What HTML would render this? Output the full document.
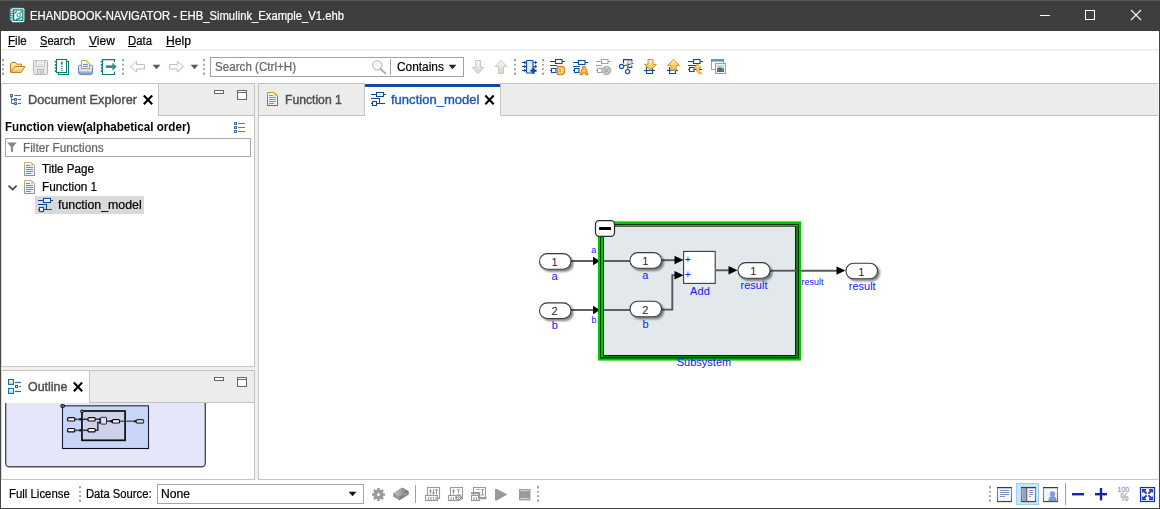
<!DOCTYPE html>
<html lang="en"><head><meta charset="utf-8"><title>EHANDBOOK-NAVIGATOR - EHB_Simulink_Example_V1.ehb</title>
<style>
*{box-sizing:border-box;margin:0;padding:0}
html,body{width:1160px;height:509px;overflow:hidden;background:#fff}
body{font-family:"Liberation Sans","DejaVu Sans",sans-serif;font-size:12px;color:#000;position:relative}
#win{position:absolute;left:0;top:0;width:1160px;height:509px;background:#fff;overflow:hidden}
#win div,#win svg{position:absolute}
.tx{position:absolute;white-space:pre;line-height:16px;height:16px;transform-origin:0 0;display:block}
.tx u{text-decoration:underline;text-decoration-thickness:1px;text-underline-offset:1px}
#title{left:0;top:0;width:1160px;height:31px;background:#3e3e3e}
.g{background:#ececec}
.b{background:#c4c4c4}
</style></head>
<body>
<div id="win">
<!-- window chrome -->
<div id="title"></div>
<div style="left:0;top:0;width:1160px;height:1px;background:#575757"></div>
<div style="left:0;top:31px;width:1px;height:478px;background:#464646"></div>
<div style="left:1159px;top:31px;width:1px;height:478px;background:#464646"></div>
<div style="left:0;top:508px;width:1160px;height:1px;background:#464646"></div>
<!-- menu separator -->
<div style="left:2px;top:49px;width:1156px;height:2px;background:#f0f0f0"></div>
<!-- toolbar search box -->
<div style="left:210px;top:57px;width:254px;height:20px;border:1px solid #a2a2a8;background:#fff"></div>
<div style="left:390px;top:59px;width:1px;height:16px;background:#a0a0a0"></div>
<!-- page background under panels -->
<div style="left:1px;top:83px;width:1158px;height:397px;background:#f0f0f0"></div>
<!-- left top panel: Document Explorer -->
<div style="left:1px;top:83px;width:254px;height:284px;background:#fff;border:1px solid #c4c4c4;border-left-color:#dadada"></div>
<div class="g" style="left:2px;top:84px;width:252px;height:31px"></div>
<div style="left:2px;top:115px;width:252px;height:1px;background:#c4c4c4"></div>
<div style="left:2px;top:84px;width:156px;height:32px;background:#fff"></div>
<div style="left:158px;top:84px;width:1px;height:32px;background:#c4c4c4"></div>
<div style="left:5px;top:138px;width:246px;height:19px;border:1px solid #a6a6ac;background:#fff"></div>
<div style="left:35px;top:196px;width:109px;height:18px;background:#d9d9d9"></div>
<!-- left bottom panel: Outline -->
<div style="left:1px;top:370px;width:254px;height:110px;background:#fff;border:1px solid #c4c4c4;border-left-color:#dadada"></div>
<div class="g" style="left:2px;top:371px;width:252px;height:31px"></div>
<div style="left:2px;top:402px;width:252px;height:1px;background:#c4c4c4"></div>
<div style="left:2px;top:371px;width:87px;height:32px;background:#fff"></div>
<div style="left:89px;top:371px;width:1px;height:32px;background:#c4c4c4"></div>
<!-- editor -->
<div style="left:258px;top:83px;width:900px;height:397px;background:#fff;border:1px solid #c4c4c4;border-right:0"></div>
<div class="g" style="left:259px;top:84px;width:899px;height:31px"></div>
<div style="left:259px;top:115px;width:899px;height:1px;background:#c4c4c4"></div>
<div style="left:364px;top:84px;width:1px;height:31px;background:#c4c4c4"></div>
<div style="left:365px;top:83px;width:135px;height:33px;background:#fff"></div>
<div style="left:365px;top:84px;width:135px;height:3px;background:#15489e"></div>
<div style="left:500px;top:84px;width:1px;height:32px;background:#c4c4c4"></div>
<!-- status bar -->
<div style="left:1px;top:480px;width:1158px;height:28px;background:#fff"></div>
<div style="left:157px;top:484px;width:207px;height:20px;border:1px solid #a6a6ac;background:#fff"></div>
<div style="left:415px;top:485px;width:1px;height:18px;background:#a0a0a0"></div>
<div style="left:1065px;top:483px;width:1px;height:22px;background:#a0a0a0"></div>
<div style="left:1016px;top:483px;width:23px;height:22px;background:#cce4f7;border:1px solid #99d1ff"></div>
<svg style="left:0;top:0" width="1160" height="509" viewBox="0 0 1160 509">
<!-- title bar: app icon + window buttons -->
<g>
<rect x="9.6" y="7.2" width="13.6" height="13.6" rx="1.6" fill="#0a7f78"/>
<rect x="11.4" y="8.2" width="13" height="14" rx="1.4" fill="#fff"/>
<rect x="9.4" y="9.4" width="3.4" height="11" fill="#0a7f78"/>
<path d="M11.6 9.6V20.6" stroke="#fff" stroke-width="2.2" stroke-dasharray="1.3 0.9"/>
<rect x="13.6" y="9.9" width="9.2" height="10.4" fill="#f0faf8" stroke="#0a7f78" stroke-width="1.2"/>
<path d="M14.6 13.5Q16.5 12.5 16.4 10.6M21.8 11.4L17 16.4M16 19.4Q19.6 19 21.8 16.6" stroke="#0a7f78" stroke-width="1.1" fill="none"/>
<circle cx="18.6" cy="15" r="1.7" fill="#fff" stroke="#2a958e" stroke-width="0.9"/>
</g>
<g stroke="#fff" stroke-width="1" fill="none">
<path d="M1040 15.5H1050"/>
<rect x="1085.5" y="10.5" width="9" height="9"/>
<path d="M1131 10L1141 20M1141 10L1131 20" stroke-width="1.1"/>
</g>
<defs>
<linearGradient id="gFold" x1="0" y1="0" x2="0" y2="1"><stop offset="0" stop-color="#fdeeb8"/><stop offset="1" stop-color="#f3c050"/></linearGradient>
<linearGradient id="gPrn" x1="0" y1="0" x2="0" y2="1"><stop offset="0" stop-color="#f4f6fc"/><stop offset="0.55" stop-color="#c8d2ee"/><stop offset="1" stop-color="#6f88cc"/></linearGradient>
<linearGradient id="gArr" x1="0" y1="0" x2="0" y2="1"><stop offset="0" stop-color="#f8f8f4"/><stop offset="1" stop-color="#d6d4c8"/></linearGradient>
<linearGradient id="gOr" x1="0" y1="0" x2="0" y2="1"><stop offset="0" stop-color="#fff4cc"/><stop offset="1" stop-color="#f2b630"/></linearGradient>
<linearGradient id="gDoc" x1="0" y1="0" x2="0" y2="1"><stop offset="0" stop-color="#c49428"/><stop offset="1" stop-color="#786a3c"/></linearGradient>
<linearGradient id="gDisk" x1="0" y1="0" x2="1" y2="0"><stop offset="0" stop-color="#c8c8c8"/><stop offset="0.5" stop-color="#a0a0a0"/><stop offset="1" stop-color="#666"/></linearGradient>
<linearGradient id="gDoc2" x1="0" y1="0" x2="0" y2="1"><stop offset="0" stop-color="#c9b47a"/><stop offset="0.5" stop-color="#a8a290"/><stop offset="1" stop-color="#7d8fbc"/></linearGradient>
</defs>
<!-- toolbar separators (drag handles) -->
<g fill="#a8a498">
<g transform="translate(2 59)"><rect x="0" y="0" width="2" height="2.4"/><rect x="0" y="4.8" width="2" height="1.8"/><rect x="0" y="9.2" width="2" height="1.8"/><rect x="0" y="13.6" width="2" height="2.2"/></g><g transform="translate(122 59)"><rect x="0" y="0" width="2" height="2.4"/><rect x="0" y="4.8" width="2" height="1.8"/><rect x="0" y="9.2" width="2" height="1.8"/><rect x="0" y="13.6" width="2" height="2.2"/></g><g transform="translate(203 59)"><rect x="0" y="0" width="2" height="2.4"/><rect x="0" y="4.8" width="2" height="1.8"/><rect x="0" y="9.2" width="2" height="1.8"/><rect x="0" y="13.6" width="2" height="2.2"/></g>
<g transform="translate(514 59)"><rect x="0" y="0" width="2" height="2.4"/><rect x="0" y="4.8" width="2" height="1.8"/><rect x="0" y="9.2" width="2" height="1.8"/><rect x="0" y="13.6" width="2" height="2.2"/></g><g transform="translate(542 59)"><rect x="0" y="0" width="2" height="2.4"/><rect x="0" y="4.8" width="2" height="1.8"/><rect x="0" y="9.2" width="2" height="1.8"/><rect x="0" y="13.6" width="2" height="2.2"/></g>
<g transform="translate(79 486)"><rect x="0" y="0" width="2" height="2.4"/><rect x="0" y="4.8" width="2" height="1.8"/><rect x="0" y="9.2" width="2" height="1.8"/><rect x="0" y="13.6" width="2" height="2.2"/></g><g transform="translate(537 486)"><rect x="0" y="0" width="2" height="2.4"/><rect x="0" y="4.8" width="2" height="1.8"/><rect x="0" y="9.2" width="2" height="1.8"/><rect x="0" y="13.6" width="2" height="2.2"/></g><g transform="translate(989 486)"><rect x="0" y="0" width="2" height="2.4"/><rect x="0" y="4.8" width="2" height="1.8"/><rect x="0" y="9.2" width="2" height="1.8"/><rect x="0" y="13.6" width="2" height="2.2"/></g>
</g>
<!-- open folder -->
<g>
<path d="M10.5 72V63.8L12 62.5H15.5L16.8 64.2H21.5V67" fill="#fbe6a4" stroke="#bf7a22" stroke-width="1"/>
<path d="M10.6 72.4L14.6 66.5H25L21 72.5z" fill="url(#gFold)" stroke="#bf7a22" stroke-width="1" stroke-linejoin="round"/>
</g>
<!-- save (disabled) -->
<g>
<rect x="33.5" y="60.5" width="14" height="14" rx="1.3" fill="#e9e9e9" stroke="#b4b4b4"/>
<rect x="36.5" y="60.5" width="8" height="6" fill="#f3f3f3" stroke="#c0c0c0" stroke-width="0.9"/>
<path d="M38 62.5H43M38 64.5H43" stroke="#d0d0d0" stroke-width="0.8"/>
<rect x="37.5" y="69.5" width="6" height="5" fill="#dcdcdc" stroke="#b4b4b4" stroke-width="0.9"/>
<rect x="40.6" y="70.8" width="1.2" height="2.8" fill="#b0b0b0"/>
</g>
<!-- notebook -->
<g>
<rect x="58.5" y="61.5" width="10" height="13" fill="#fff" stroke="#0d7d74" stroke-width="1.1"/>
<rect x="56.5" y="59.5" width="10" height="13" fill="#fff" stroke="#0d7d74" stroke-width="1.1"/>
<path d="M55.6 61V72" stroke="#0d7d74" stroke-width="1.6" stroke-dasharray="1.6 1.5"/>
<rect x="60.3" y="61.5" width="3" height="9" fill="#e4f2f0"/>
<path d="M61.8 61.8V64.6M61.8 66V67M61.8 68.2V69.2M61.8 70.3V71" stroke="#16887e" stroke-width="1.6"/>
</g>
<!-- print -->
<g>
<path d="M78.5 66.5Q78.5 65.3 79.8 65.3H91.4Q92.6 65.3 92.6 66.5V72.2Q92.6 74.6 90 74.6H81.2Q78.5 74.6 78.5 72.2z" fill="url(#gPrn)" stroke="#6a86cc" stroke-width="1"/>
<path d="M79.5 70.6H91.8" stroke="#fff" stroke-width="1" opacity=".7"/>
<path d="M81.5 68.6V60.5H86.6L89.5 63.4V68.6z" fill="#f6f7fc" stroke="#c2a25c" stroke-width="1"/>
<path d="M86.4 60.6V63.6H89.4z" fill="#e6c67c"/>
<path d="M83 64.6H88M83 66.6H88" stroke="#6c84c4" stroke-width="1"/>
</g>
<!-- export -->
<g>
<path d="M114.5 62V59.6H102.5V74.5H114.5V71.6" fill="#fff" stroke="#0d7d74" stroke-width="1.2"/>
<path d="M101.6 61V73" stroke="#0d7d74" stroke-width="1.6" stroke-dasharray="1.6 1.5"/>
<path d="M106 65.3H112.4V62.8L116.8 66.7L112.4 70.6V68.1H106z" fill="#2f9088"/>
</g>
<!-- back / forward arrows (disabled) -->
<g fill="#fcfcfc" stroke="#bdbdbd" stroke-width="1">
<path d="M130.5 66.7L136.6 61.4V64.5H144.4V69H136.6V72.1z"/>
<path d="M183.5 66.7L177.4 61.4V64.5H169.6V69H177.4V72.1z"/>
</g>
<g fill="#5a5a5a"><path d="M152.6 64.8H160.4L156.5 69.2z"/><path d="M190.6 64.8H198.4L194.5 69.2z"/></g>
<!-- magnifier -->
<g>
<circle cx="377.2" cy="65.2" r="4.6" fill="#f6f6f6" stroke="#c4c4c4" stroke-width="1.3"/>
<path d="M380.6 68.8L385.4 73.4" stroke="#a8a8a8" stroke-width="1.8" stroke-linecap="round"/>
</g>
<path d="M448.6 64.8H456.4L452.5 69.2z" fill="#222"/>
<!-- down / up (disabled) -->
<g fill="url(#gArr)" stroke="#c9c8c0" stroke-width="1">
<path d="M475.5 60.5H480.5V67.5H483.8L478 73.8L472.2 67.5H475.5z"/>
<path d="M498.5 73.5H503.5V66.5H506.8L501 60.2L495.2 66.5H498.5z"/>
</g>
<!-- chip + -->
<g stroke="#0a4ca0" fill="none" stroke-width="1.1">
<rect x="526.5" y="60.5" width="6.5" height="12.5" rx="0.8" fill="#e2ecf8"/>
<path d="M522 62.5H526M522 66.5H526M522 70.5H526M533 62.5H537M533 66.5H537"/>
</g>
<g fill="#0a4ca0">
<path d="M524.2 60.8L526.6 62.5L524.2 64.2zM524.2 64.8L526.6 66.5L524.2 68.2zM524.2 68.8L526.6 70.5L524.2 72.2zM535 60.8L537.4 62.5L535 64.2zM535 64.8L537.4 66.5L535 68.2z"/>
<rect x="530.4" y="69.6" width="6.2" height="2.2"/><rect x="532.4" y="67.6" width="2.2" height="6.2"/>
</g>
<!-- D icon -->
<g stroke="#0a4ca0" fill="none" stroke-width="1.1">
<path d="M550 61.5H556M562 61.5H565M550 65.5H557M550 70.5H551.5"/>
<rect x="555.5" y="59.5" width="6.5" height="4" fill="#fff"/><rect x="551.5" y="68.5" width="4.5" height="4" fill="#fff"/>
</g>
<path d="M557.5 66.5H561.2Q564.6 66.5 564.6 70.5Q564.6 74.5 561.2 74.5H557.5z" fill="#fbd9a0" stroke="#e8890c" stroke-width="1.5"/>
<path d="M560 68.6V72.4" stroke="#e8890c" stroke-width="1.3"/>
<!-- A icon -->
<g stroke="#0a4ca0" fill="none" stroke-width="1.1">
<path d="M573 62.5H579M585 62.5H588M573 66.5H580M573 70.5H574.5"/>
<rect x="578.5" y="60.5" width="6.5" height="4" fill="#fff"/><rect x="574.5" y="68.5" width="4.5" height="4" fill="#fff"/>
</g>
<path d="M580 74.6L583 66.6H585L588 74.6H585.8L585.2 72.8H582.8L582.2 74.6z" fill="#f8c070" stroke="#e8890c" stroke-width="1.2" stroke-linejoin="round"/>
<!-- X icon (disabled) -->
<g stroke="#a0a4ac" fill="none" stroke-width="1.1">
<path d="M596 61.5H602M608 61.5H611M596 70.5H597.5"/>
<rect x="601.5" y="59.5" width="6.5" height="4" fill="#fff"/><rect x="597.5" y="68.5" width="4.5" height="4" fill="#fff"/>
</g>
<path d="M596 65.5H602" stroke="#c09aa0" stroke-width="1.2"/>
<path d="M604.3 66.4H608.5L610.7 68.6V72.4L608.5 74.6H604.3L602.1 72.4V68.6z" fill="#ccc8b8" stroke="#a8a8a8" stroke-width="0.9"/>
<path d="M604 68.2L608.8 72.8M608.8 68.2L604 72.8" stroke="#9a9a9a" stroke-width="0.9"/>
<!-- scissors -->
<g stroke="#0a4ca0" fill="none" stroke-width="1.1">
<path d="M623.5 63.5V59.6H631.8V62.4M631.8 65.4V67.4H627.6"/>
<circle cx="621.5" cy="66.5" r="2.1" fill="#f0f6ff"/><circle cx="627.6" cy="71.6" r="2.1" fill="#f0f6ff"/>
</g>
<path d="M623.4 66L633.4 63.2M627.6 69.6L628.4 59.6" stroke="#50586a" stroke-width="1.1" fill="none"/>
<rect x="628" y="61" width="3.4" height="2.4" fill="#d8e6f8"/>
<!-- down onto box -->
<g stroke="#0a4ca0" fill="none" stroke-width="1.1"><path d="M644 70.5H655"/><path d="M646.5 66V73.5H652.5V66"/></g>
<path d="M648 59.5H653V64.3H656.4L650.5 70.4L644.6 64.3H648z" fill="url(#gOr)" stroke="#d8921c" stroke-width="1" stroke-linejoin="round"/>
<!-- up from box -->
<g stroke="#0a4ca0" fill="none" stroke-width="1.1"><path d="M667 70.5H678"/><path d="M669.5 67V73.5H675.5V67"/></g>
<path d="M671 70.2H676V65.4H679.4L673.5 59.3L667.6 65.4H671z" fill="url(#gOr)" stroke="#d8921c" stroke-width="1" stroke-linejoin="round"/>
<!-- reorder -->
<g stroke="#0a4ca0" fill="none" stroke-width="1.1">
<path d="M688 61.5H693.5M700 61.5H703M688 65.5H697M688 69.5H689.5M694 69.5H702"/>
<rect x="693.5" y="59.5" width="6.5" height="4" fill="#fff"/><rect x="689.5" y="67.5" width="4.5" height="4" fill="#fff"/>
</g>
<path d="M693.8 68L697.6 64L701.2 68H699Q698.6 72 701.6 73.8Q696.4 74 696 68z" fill="#fbd070" stroke="#d8921c" stroke-width="0.9" stroke-linejoin="round"/>
<!-- windows -->
<g>
<rect x="711.5" y="59.5" width="12" height="10" fill="#fdfdfd" stroke="#b59c72" stroke-width="1"/>
<rect x="711" y="59" width="13" height="2.6" fill="#5b92d4"/>
<rect x="715.5" y="63.5" width="10" height="10" fill="#f2f6fa" stroke="#9a9ca8" stroke-width="1"/>
<rect x="717" y="65" width="7" height="3.4" fill="#bcd6f4"/><rect x="717" y="68.2" width="7" height="3.8" fill="#5a8a6a"/>
<path d="M717 69L720 67L724 70V72H717z" fill="#4a7a66"/>
</g>
<!-- Document Explorer tab icon -->
<g fill="#4a6aa8">
<rect x="10" y="94" width="3" height="3"/><rect x="14" y="98" width="3" height="3"/><rect x="14" y="102" width="3" height="3"/>
</g>
<g stroke="#4a6aa8" stroke-width="1" fill="none">
<path d="M11.5 97V103.5H14M11.5 99.5H14"/><path d="M14.5 95.5H21M18 99.5H21M18 103.5H21"/>
</g>
<g fill="#c8d4ec"><rect x="11" y="95" width="1" height="1"/><rect x="15" y="99" width="1" height="1"/><rect x="15" y="103" width="1" height="1"/></g>
<g transform="translate(143 95)"><path d="M0.8 0.6L9.2 9.2M9.2 0.6L0.8 9.2" stroke="#000" stroke-width="2.1" fill="none"/></g>
<g transform="translate(214 90)" fill="#fff" stroke="#666" stroke-width="1">
<rect x="0.5" y="0.5" width="9" height="3"/>
<rect x="23.5" y="0.5" width="9" height="9"/><path d="M23.5 2.5H32.5"/>
</g>
<!-- list icon -->
<g fill="#4a6aa8"><rect x="234" y="122" width="3" height="3"/><rect x="234" y="126" width="3" height="3"/><rect x="234" y="130" width="3" height="3"/></g>
<g fill="#c8d4ec"><rect x="235" y="123" width="1" height="1"/><rect x="235" y="127" width="1" height="1"/><rect x="235" y="131" width="1" height="1"/></g>
<path d="M238 123.5H245M238 127.5H245M238 131.5H245" stroke="#5f7dbc" stroke-width="1"/>
<!-- funnel -->
<path d="M7.2 142.4H16.6L13 147V152.4L10.9 151V147z" fill="#858585"/>
<!-- tree -->
<g transform="translate(24 162)">
<path d="M0.5 0.5H7.5L10.5 3.5V13.5H0.5z" fill="#f0f3fc" stroke="url(#gDoc2)" stroke-width="1"/>
<path d="M7.2 0.6V3.8H10.4z" fill="#e2c078"/>
<path d="M2 3.5H6M2 5.5H9M2 7.5H9M2 9.5H9M2 11.5H7" stroke="#7486bc" stroke-width="1" fill="none"/>
</g>
<g transform="translate(24 180)">
<path d="M0.5 0.5H7.5L10.5 3.5V13.5H0.5z" fill="#f0f3fc" stroke="url(#gDoc2)" stroke-width="1"/>
<path d="M7.2 0.6V3.8H10.4z" fill="#e2c078"/>
<path d="M2 3.5H6M2 5.5H9M2 7.5H9M2 9.5H9M2 11.5H7" stroke="#7486bc" stroke-width="1" fill="none"/>
</g>
<path d="M8.6 185.6L12.6 189.6L16.6 185.6" stroke="#404040" stroke-width="1.5" fill="none"/>
<g transform="translate(38 198)" fill="none" stroke="#0a4c9c" stroke-width="1.1">
<path d="M0 2.5H5.5M12.5 2.5H15"/><rect x="5.5" y="0.5" width="7" height="4" fill="#fff"/>
<path d="M0 6.5H8.5V11.5M0 11.5H1.5M5.5 11.5H14"/><rect x="1.5" y="9.5" width="4" height="4" fill="#fff"/>
<path d="M7.5 2.5H10.5" stroke="#d4e0f4" stroke-width="1"/>
</g>
<!-- Outline tab -->
<linearGradient id="gSq" x1="0" y1="0" x2="0" y2="1"><stop offset="0" stop-color="#fff"/><stop offset="1" stop-color="#a4caf4"/></linearGradient>
<g fill="url(#gSq)" stroke="#1b6ab8" stroke-width="1"><rect x="8.5" y="379.5" width="5" height="5"/><rect x="8.5" y="388.5" width="5" height="5"/></g>
<path d="M15 382.5H21M15 391.5H21" stroke="#d4e8fa" stroke-width="2.2" fill="none"/>
<path d="M15 382.5H21M15 391.5H21M19 386.5H21" stroke="#2a68a8" stroke-width="1" fill="none"/>
<rect x="15.5" y="385.5" width="2" height="2" fill="#fff" stroke="#1b5c9e" stroke-width="1"/>
<g transform="translate(73 382)"><path d="M0.8 0.6L9.2 9.2M9.2 0.6L0.8 9.2" stroke="#000" stroke-width="2.1" fill="none"/></g>
<g transform="translate(214 377)" fill="#fff" stroke="#666" stroke-width="1">
<rect x="0.5" y="0.5" width="9" height="3"/>
<rect x="23.5" y="0.5" width="9" height="9"/><path d="M23.5 2.5H32.5"/>
</g>
<!-- editor tabs -->
<g transform="translate(267 92)">
<path d="M0.5 0.5H7.5L10.5 3.5V13.5H0.5z" fill="#eef2fc" stroke="url(#gDoc)" stroke-width="1"/>
<path d="M7.2 0.6V3.8H10.4z" fill="#e4b44c"/>
<path d="M2 3.5H6M2 5.5H9M2 7.5H9M2 9.5H9M2 11.5H7" stroke="#7f92c6" stroke-width="1" fill="none"/>
</g>
<g transform="translate(371 92)" fill="none" stroke="#0a4c9c" stroke-width="1.1">
<path d="M0 2.5H5.5M12.5 2.5H15"/><rect x="5.5" y="0.5" width="7" height="4" fill="#fff"/>
<path d="M0 6.5H8.5V11.5M0 11.5H1.5M5.5 11.5H14"/><rect x="1.5" y="9.5" width="4" height="4" fill="#fff"/>
<path d="M7.5 2.5H10.5" stroke="#d4e0f4" stroke-width="1"/>
</g>
<g transform="translate(484.5 95)"><path d="M0.8 0.6L9.2 9.2M9.2 0.6L0.8 9.2" stroke="#000" stroke-width="2.1" fill="none"/></g>
<path d="M348.6 491.8H356.4L352.5 496.2z" fill="#111"/>
<!-- gear -->
<g fill="#9c9c9c">
<circle cx="378.5" cy="494.5" r="5"/>
<g stroke="#9c9c9c" stroke-width="2.4">
<path d="M378.5 488V501M372 494.5H385M373.9 489.9L383.1 499.1M383.1 489.9L373.9 499.1"/>
</g>
<circle cx="378.5" cy="494.5" r="1.5" fill="#fff"/>
</g>
<!-- disk -->
<path d="M393.3 493.2L402.4 487.6L408.8 491.4V494.6L399.6 500.2L393.3 496.4z" fill="#808080"/>
<path d="M393.6 493.2L402.4 488L408.5 491.6L399.6 497z" fill="url(#gDisk)"/>
<path d="M395 495.5L399.5 498.3M404 495L407 493.2" stroke="#c8c8c8" stroke-width="0.8"/>
<!-- gray mixer icons -->
<g stroke="#9a9a9a" fill="none" stroke-width="1.1">
<rect x="427.5" y="487.5" width="12" height="11"/><rect x="425.5" y="495.5" width="12" height="5" fill="#fff"/>
<path d="M430.5 489V494.5M433.5 489V494.5M436.5 489V494.5M428.5 497V500M431 497V500M433.5 497V500M436 497V500"/>
<rect x="450.5" y="487.5" width="12" height="11"/><rect x="448.5" y="495.5" width="8" height="5" fill="#fff"/>
<path d="M453.5 489V494.5M458.5 489V493M451 497V500M453.5 497V500"/>
<rect x="473.5" y="487.5" width="12" height="11"/><rect x="471.5" y="495.5" width="8" height="5" fill="#fff"/>
<path d="M476.5 489.5H479.5M482.5 489V495M481 489.5H484M481 495H484M474 497V500M476.5 497V500"/>
</g>
<g fill="#9a9a9a">
<rect x="429.5" y="490" width="2" height="2"/><rect x="432.5" y="492" width="2" height="2"/><rect x="435.5" y="489" width="2" height="2"/>
<rect x="452.5" y="490" width="2" height="2"/><rect x="457.5" y="489" width="2" height="1.6"/>
<circle cx="458.6" cy="497.6" r="3.4"/>
<rect x="471" y="492" width="9" height="2.2"/><rect x="478" y="492" width="2.2" height="6"/><rect x="478" y="497" width="8.5" height="2.2"/>
<path d="M495 489H497L507.4 494.5L497 500.4H495z"/>
<rect x="519" y="489" width="11.4" height="11.4"/>
</g>
<path d="M456.6 495.6L460.6 499.6M460.6 495.6L456.6 499.6" stroke="#f4f4f4" stroke-width="1"/>
<path d="M520.5 490.6H529M520.5 498.6H529" stroke="#e4e4e4" stroke-width="0.9"/>
<!-- right: layout icons -->
<g>
<rect x="997.5" y="487.5" width="14" height="14" fill="#eef6fa" stroke="url(#gDoc)" stroke-width="1.1"/>
<path d="M997 487.6H1012" stroke="#3c3c3c" stroke-width="1.2"/><path d="M997 501.6H1012" stroke="#4a4030" stroke-width="1"/>
<path d="M1000 490.5H1009M1000 492.5H1009M1000 494.5H1009M1000 496.5H1005" stroke="#8092c4" stroke-width="1"/>
<rect x="1021.5" y="487.5" width="14" height="14" fill="#eef6fa" stroke="url(#gDoc)" stroke-width="1.1"/>
<rect x="1022.2" y="488.2" width="4" height="13" fill="#8aa6da"/>
<path d="M1026.7 488V501.5" stroke="#6a5a2a" stroke-width="1.1"/>
<path d="M1021 487.6H1036" stroke="#3c3c3c" stroke-width="1.2"/><path d="M1021 501.6H1036" stroke="#4a4030" stroke-width="1"/>
<path d="M1029 490.5H1033M1029 492.5H1033M1029 494.5H1033M1029 496.5H1031" stroke="#8092c4" stroke-width="1"/>
<rect x="1043.5" y="487.5" width="14" height="14" fill="#eef6fa" stroke="url(#gDoc)" stroke-width="1.1"/>
<path d="M1043 487.6H1058" stroke="#3c3c3c" stroke-width="1.2"/><path d="M1043 501.6H1058" stroke="#4a4030" stroke-width="1"/>
<circle cx="1052.5" cy="494" r="2.3" fill="#7f9fdc" stroke="#5a7cc4" stroke-width="0.6"/>
<path d="M1049 501V499.2Q1049 496.6 1052.5 496.6Q1056 496.6 1056 499.2V501z" fill="#7f9fdc" stroke="#5a7cc4" stroke-width="0.6"/>
</g>
<!-- zoom controls -->
<g fill="#1a22a8">
<rect x="1072" y="493" width="12" height="2.4"/>
<rect x="1095" y="493" width="12" height="2.4"/><rect x="1099.8" y="488" width="2.4" height="12.4"/>
</g>
<g font-family="'Liberation Sans',sans-serif" font-size="8" fill="#a4a4a4" stroke="#a4a4a4" stroke-width="0.3">
<text x="1117.6" y="492.4" textLength="11.6" lengthAdjust="spacingAndGlyphs">100</text>
<text x="1120.6" y="501.3" font-size="10.4" textLength="8" lengthAdjust="spacingAndGlyphs">%</text>
</g>
<g>
<rect x="1140.5" y="487.5" width="14" height="14" fill="#fff" stroke="#1a2cb4" stroke-width="1.2"/>
<rect x="1141.4" y="488.4" width="12.2" height="12.2" fill="none" stroke="#c4d4e0" stroke-width="0.8"/>
<g stroke="#1a2cb4" fill="none">
<path d="M1143.6 490.6L1146.6 493.6M1151.4 490.6L1148.4 493.6M1143.6 498.4L1146.6 495.4M1151.4 498.4L1148.4 495.4" stroke-width="1.7"/>
<path d="M1142.8 492.6V489.8H1146M1152.2 492.6V489.8H1149M1142.8 496.4V499.2H1146M1152.2 496.4V499.2H1149" stroke-width="1.4"/>
</g>
</g>
</svg>

<svg style="left:520px;top:210px" width="380" height="170" viewBox="520 210 380 170" font-family="'Liberation Sans',sans-serif">
<defs>
<filter id="sh" x="-20%" y="-30%" width="150%" height="180%"><feGaussianBlur in="SourceAlpha" stdDeviation="1"/><feOffset dx="2.2" dy="2.2"/><feComponentTransfer><feFuncA type="linear" slope="0.5"/></feComponentTransfer><feMerge><feMergeNode/><feMergeNode in="SourceGraphic"/></feMerge></filter>
</defs>
<!-- outer signal lines -->
<g stroke="#585858" stroke-width="1.9" fill="none">
<path d="M571 261H594"/><path d="M571 310H594"/><path d="M770 270.7H838"/>
</g>
<g fill="#000">
<path d="M593 256.8L600 261L593 265.2z"/><path d="M593 305.8L600 310L593 314.2z"/>
<path d="M836.5 266.4L845.5 270.6L836.5 274.8z"/>
</g>
<!-- subsystem frame -->
<rect x="598" y="221" width="203" height="139.6" fill="#00c800"/>
<rect x="598" y="221" width="203" height="1" fill="#5cdc5c"/>
<rect x="600" y="224" width="199" height="134.5" fill="#003400"/>
<rect x="601" y="225" width="197" height="132" fill="#00c400"/>
<rect x="603" y="226" width="195" height="131" fill="#008c00"/>
<rect x="603" y="226" width="193" height="130" fill="#16161a"/>
<rect x="603" y="226" width="192" height="2" fill="#5a5c5a"/>
<rect x="604" y="227" width="191" height="128" fill="#e2e8ec"/>
<!-- inner signal lines -->
<g stroke="#585858" stroke-width="1.9" fill="none">
<path d="M604 261H630"/><path d="M604 310H630"/>
<path d="M661 260.2H676"/>
<path d="M661 309.6H672.3V275.2H676"/>
<path d="M716 270.3H730"/>
<path d="M770 270.7H797"/>
</g>
<g fill="#000">
<path d="M674.5 255.8L683.5 260L674.5 264.2z"/><path d="M674.5 271L683.5 275.2L674.5 279.4z"/>
<path d="M728.5 266.1L737.5 270.3L728.5 274.5z"/>
</g>
<!-- blocks -->
<g fill="#fff" stroke="#3a3a3a" stroke-width="1.1" filter="url(#sh)">
<rect x="539.5" y="253.6" width="31.5" height="15.6" rx="7.8"/>
<rect x="539.5" y="302.9" width="31.5" height="15.6" rx="7.8"/>
<rect x="630" y="252.6" width="31.5" height="15.6" rx="7.8"/>
<rect x="630" y="301.2" width="31.5" height="15.6" rx="7.8"/>
<rect x="738" y="262.6" width="32" height="15.6" rx="7.8"/>
<rect x="846" y="263.2" width="31.5" height="15.6" rx="7.8"/>
</g>
<rect x="683.6" y="251.4" width="31.6" height="32" fill="#fff" stroke="#3a3a3a" stroke-width="1.1"/>
<!-- collapse button -->
<rect x="595.5" y="220.7" width="19" height="15.6" rx="3.6" fill="#fff" stroke="#2c2c2c" stroke-width="1.25"/>
<rect x="599" y="227" width="12" height="3" rx="0.5" fill="#000"/>
<!-- block numbers -->
<g font-size="11" fill="#3d1038" text-anchor="middle">
<text x="554.6" y="266">1</text><text x="554.6" y="315">2</text>
<text x="645.2" y="265">1</text><text x="645.2" y="313.6">2</text>
<text x="753.4" y="275">1</text><text x="861.3" y="275.6">1</text>
</g>
<!-- labels -->
<g font-size="11" fill="#1414ff" text-anchor="middle">
<text x="554.6" y="280">a</text><text x="554.8" y="328.6">b</text>
<text x="645.3" y="279">a</text><text x="645.5" y="327.6">b</text>
<text x="700" y="294.6" letter-spacing="0.2">Add</text>
<text x="754" y="288.8">result</text><text x="862.2" y="289.8">result</text>
<text x="704" y="365.8">Subsystem</text>
<text x="687.8" y="263" font-size="10.6">+</text><text x="687.8" y="277.6" font-size="10.6">+</text>
</g>
<g font-size="9" fill="#1414ff" text-anchor="middle">
<text x="593.8" y="253">a</text><text x="594" y="323.2">b</text><text x="812.6" y="285">result</text>
</g>
</svg>

<svg style="left:2px;top:403px" width="252" height="76" viewBox="2 403 252 76">
<rect x="5.7" y="395" width="199.6" height="71.8" rx="3.5" fill="#e6e6fa" stroke="#50505a" stroke-width="1.4"/>
<rect x="62.5" y="405.6" width="86" height="42.9" fill="#c8d5f8" stroke="#20202c" stroke-width="1.1"/>
<rect x="62" y="405" width="87" height="1.4" fill="#555a68"/>
<path d="M62 448.5H149" stroke="#0c0c14" stroke-width="1.2"/>
<rect x="81.8" y="411" width="43.4" height="29.5" fill="#cfd1ea" stroke="#2a5a3c" stroke-width="1.5"/>
<rect x="82" y="411" width="43.1" height="29.2" fill="none" stroke="#050505" stroke-width="1.3"/>
<g stroke="#55555e" stroke-width="1.7" fill="none">
<path d="M75 419.3H81"/><path d="M75 430.3H81"/>
</g>
<g stroke="#33333a" stroke-width="1.5" fill="none">
<path d="M83 419.3H88"/><path d="M83 430.3H88"/>
<path d="M95 419.2H101"/><path d="M95 430.2H97.8V422.4H101"/>
<path d="M106 421.2H112"/>
</g>
<path d="M119 421.2H136" stroke="#2a2a34" stroke-width="1.1" fill="none"/>
<g fill="#111"><rect x="79.4" y="418.2" width="2" height="2.2"/><rect x="79.4" y="429.2" width="2" height="2.2"/><rect x="99" y="418.2" width="1.8" height="2.2"/><rect x="99" y="421.3" width="1.8" height="2.2"/><rect x="110.2" y="420.2" width="2" height="2.2"/><rect x="134.2" y="420.2" width="2" height="2.2"/></g>
<g fill="#fff" stroke="#08080c" stroke-width="1.2">
<rect x="67.6" y="417.6" width="7.2" height="3.4" rx="1"/><rect x="67.6" y="428.5" width="7.2" height="3.4" rx="1"/>
<rect x="88" y="417.6" width="7.2" height="3.4" rx="1"/><rect x="88" y="428.5" width="7.2" height="3.4" rx="1"/>
<rect x="112.3" y="419.6" width="7.2" height="3.4" rx="1"/>
<rect x="136.4" y="419.7" width="7.2" height="3.4" rx="1" fill="#dcdcec" stroke="#33333c"/>
<rect x="100.7" y="417.3" width="5.8" height="6.8" rx="0.6" fill="#e0e2f6" stroke="#2a2a34" stroke-width="1"/>
</g>
<g fill="#0c0c0c"><ellipse cx="62.6" cy="406" rx="2.4" ry="2"/><ellipse cx="82.2" cy="411.2" rx="2" ry="1.8"/></g>
<g fill="#ddd"><rect x="61.2" y="405.6" width="2.8" height="0.8"/><rect x="81" y="410.8" width="2.4" height="0.8"/></g>
</svg>

<span class="tx" style="left:30.00px;top:7.84px;font-size:12px;color:#fff;transform:scaleX(0.9379);-webkit-text-stroke:0.22px #fff;">EHANDBOOK-NAVIGATOR - EHB_Simulink_Example_V1.ehb</span>
<span class="tx" style="left:7.60px;top:32.84px;font-size:12px;color:#000;transform:scaleX(0.9616);-webkit-text-stroke:0.22px #000;"><u>F</u>ile</span>
<span class="tx" style="left:39.60px;top:32.84px;font-size:12px;color:#000;transform:scaleX(0.9256);-webkit-text-stroke:0.22px #000;"><u>S</u>earch</span>
<span class="tx" style="left:88.60px;top:32.84px;font-size:12px;color:#000;transform:scaleX(1.0001);-webkit-text-stroke:0.22px #000;"><u>V</u>iew</span>
<span class="tx" style="left:127.80px;top:32.84px;font-size:12px;color:#000;transform:scaleX(0.9464);-webkit-text-stroke:0.22px #000;"><u>D</u>ata</span>
<span class="tx" style="left:166.00px;top:32.84px;font-size:12px;color:#000;transform:scaleX(1.0127);-webkit-text-stroke:0.22px #000;"><u>H</u>elp</span>
<span class="tx" style="left:215.30px;top:58.84px;font-size:12px;color:#666;transform:scaleX(0.9691);-webkit-text-stroke:0.22px #666;">Search (Ctrl+H)</span>
<span class="tx" style="left:397.30px;top:58.84px;font-size:12px;color:#000;transform:scaleX(0.9900);-webkit-text-stroke:0.22px #000;">Contains</span>
<span class="tx" style="left:27.50px;top:91.84px;font-size:12px;color:#4e4e4e;transform:scaleX(1.0611);-webkit-text-stroke:0.4px #4e4e4e;">Document Explorer</span>
<span class="tx" style="left:5.30px;top:118.84px;font-size:12px;font-weight:700;color:#000;transform:scaleX(0.9683);">Function view(alphabetical order)</span>
<span class="tx" style="left:23.30px;top:139.84px;font-size:12px;color:#666;transform:scaleX(0.9838);-webkit-text-stroke:0.22px #666;">Filter Functions</span>
<span class="tx" style="left:42.30px;top:160.84px;font-size:12px;color:#000;transform:scaleX(0.9703);-webkit-text-stroke:0.22px #000;">Title Page</span>
<span class="tx" style="left:42.20px;top:178.84px;font-size:12px;color:#000;transform:scaleX(0.9831);-webkit-text-stroke:0.22px #000;">Function 1</span>
<span class="tx" style="left:58.30px;top:196.84px;font-size:12px;color:#000;transform:scaleX(1.0284);-webkit-text-stroke:0.22px #000;">function_model</span>
<span class="tx" style="left:27.60px;top:378.84px;font-size:12px;color:#4e4e4e;transform:scaleX(1.0360);-webkit-text-stroke:0.4px #4e4e4e;">Outline</span>
<span class="tx" style="left:284.60px;top:91.84px;font-size:12px;color:#4e4e4e;transform:scaleX(1.0134);-webkit-text-stroke:0.4px #4e4e4e;">Function 1</span>
<span class="tx" style="left:390.60px;top:91.84px;font-size:12px;color:#1e55b0;transform:scaleX(1.0861);-webkit-text-stroke:0.35px #1e55b0;">function_model</span>
<span class="tx" style="left:9.40px;top:485.84px;font-size:12px;color:#000;transform:scaleX(0.9495);-webkit-text-stroke:0.22px #000;">Full License</span>
<span class="tx" style="left:86.00px;top:485.84px;font-size:12px;color:#000;transform:scaleX(0.9365);-webkit-text-stroke:0.22px #000;">Data Source:</span>
<span class="tx" style="left:161.30px;top:485.84px;font-size:12px;color:#000;transform:scaleX(1.0109);-webkit-text-stroke:0.22px #000;">None</span>
</div>
</body></html>
